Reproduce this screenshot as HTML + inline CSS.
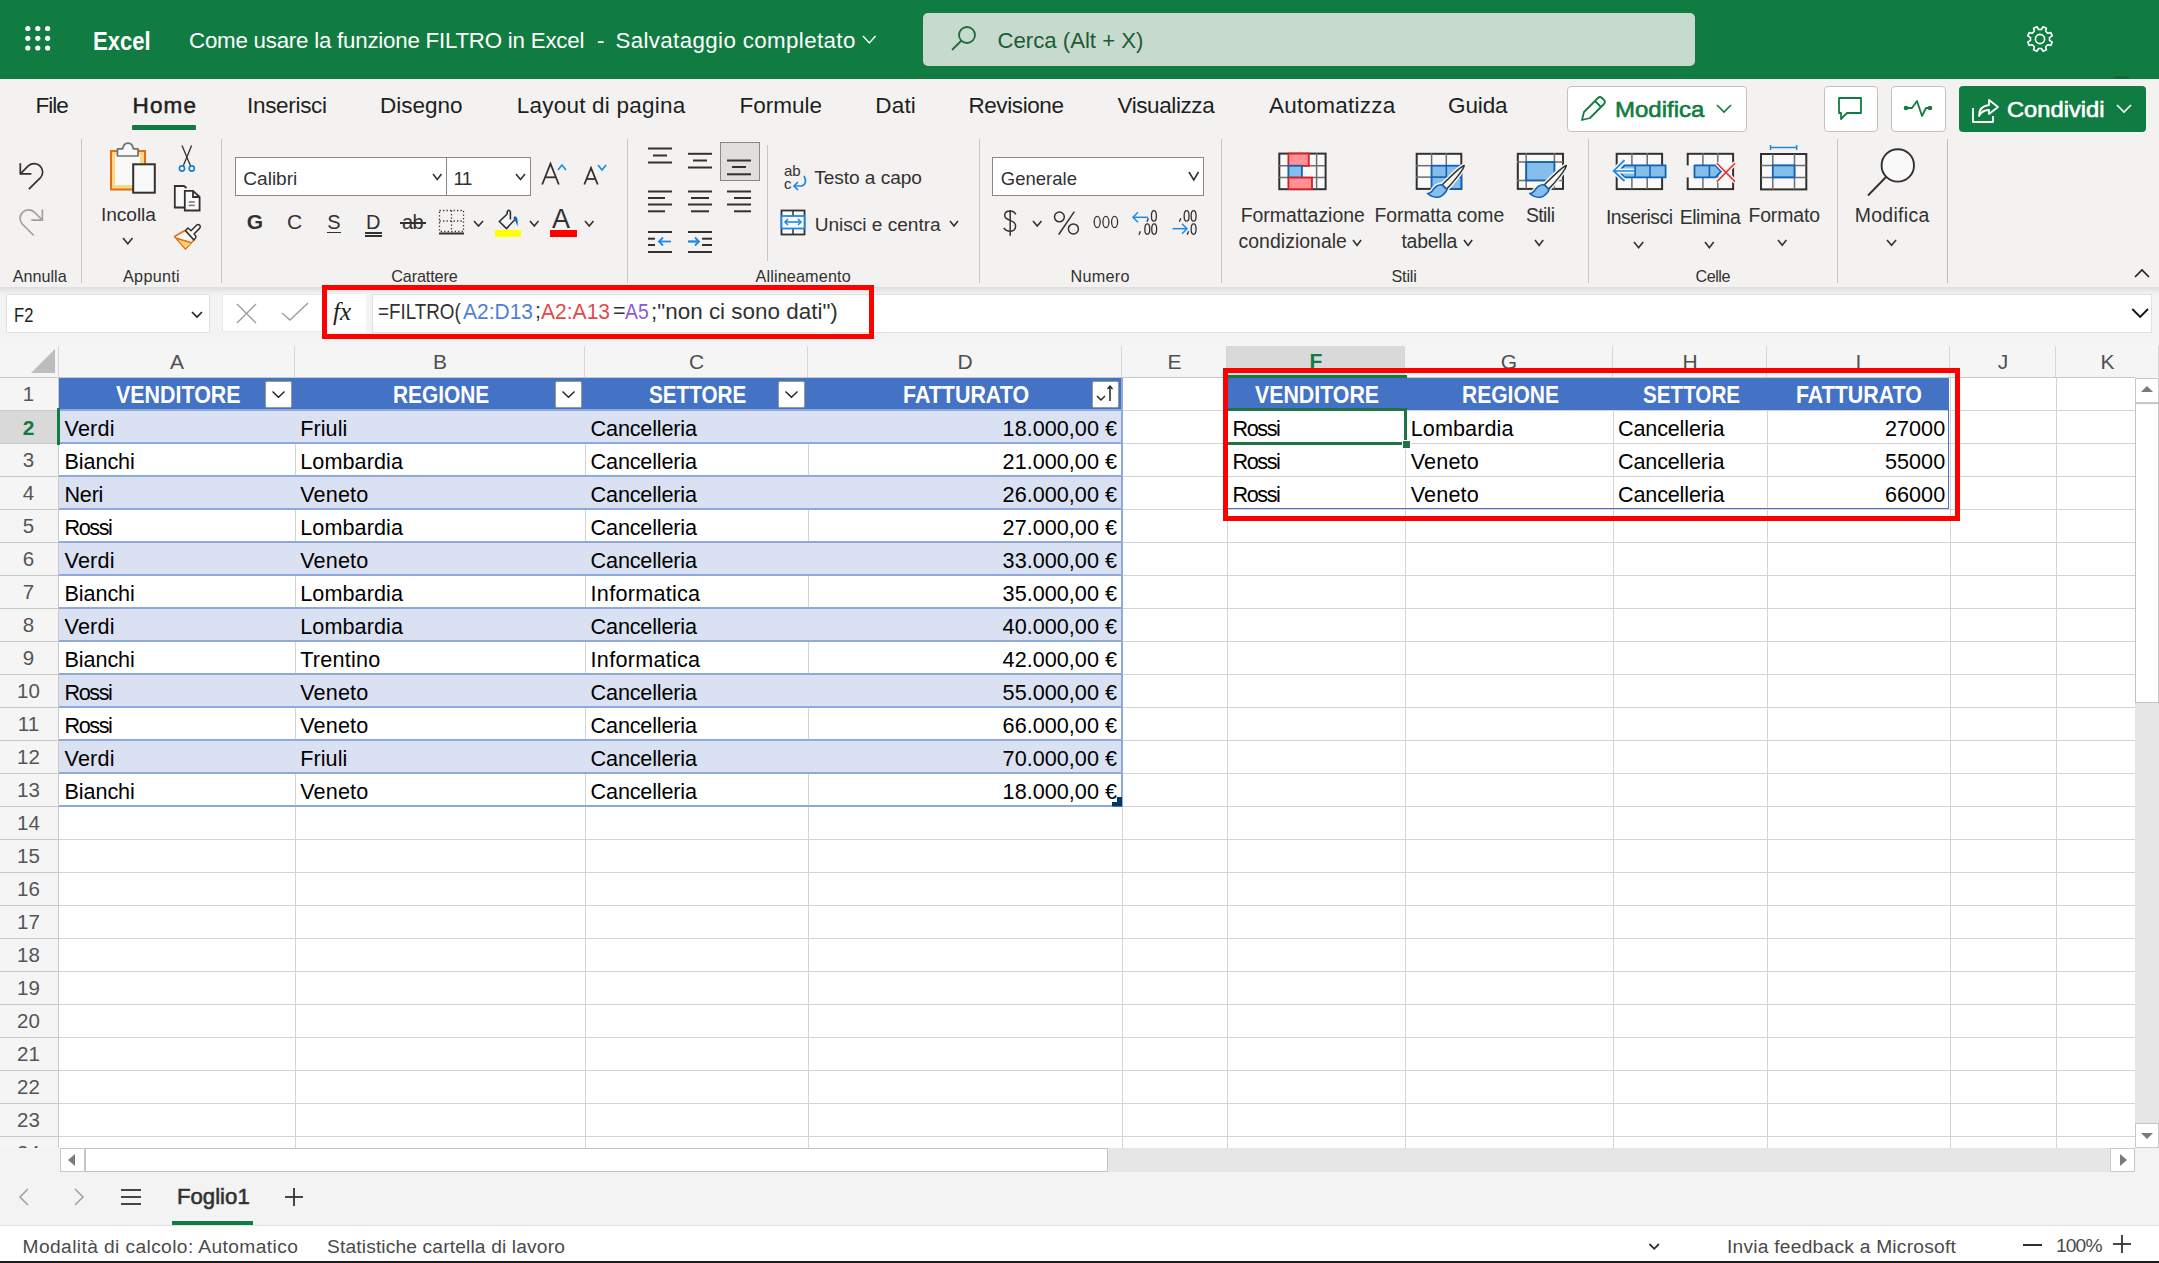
<!DOCTYPE html><html><head><meta charset="utf-8"><style>
*{margin:0;padding:0;box-sizing:border-box}
html,body{width:2159px;height:1263px;overflow:hidden;background:#fff}
body{position:relative;font-family:"Liberation Sans",sans-serif}
.a{position:absolute}
.t{white-space:pre;line-height:1}
</style></head><body><div class="a" style="left:0px;top:0px;width:2159px;height:79px;background:#107c41"></div>
<svg class="a" style="left:0px;top:0px;" width="70" height="70" viewBox="0 0 70 70"><circle cx="27.8" cy="28.5" r="2.6" fill="#fff"/><circle cx="37.8" cy="28.5" r="2.6" fill="#fff"/><circle cx="47.6" cy="28.5" r="2.6" fill="#fff"/><circle cx="27.8" cy="38.3" r="2.6" fill="#fff"/><circle cx="37.8" cy="38.3" r="2.6" fill="#fff"/><circle cx="47.6" cy="38.3" r="2.6" fill="#fff"/><circle cx="27.8" cy="48" r="2.6" fill="#fff"/><circle cx="37.8" cy="48" r="2.6" fill="#fff"/><circle cx="47.6" cy="48" r="2.6" fill="#fff"/></svg>
<div class="a t" style="left:92.80px;top:28.71px;font-size:25.14px;color:#fff;font-weight:700;transform:scaleX(0.8780);transform-origin:0 0;">Excel</div>
<div class="a t" style="left:189.00px;top:30.32px;font-size:22.3px;color:#fff;letter-spacing:-0.222px;">Come usare la funzione FILTRO in Excel</div>
<div class="a t" style="left:597.00px;top:30.32px;font-size:22.3px;color:#fff;">-</div>
<div class="a t" style="left:615.40px;top:30.32px;font-size:22.3px;color:#fff;letter-spacing:0.386px;">Salvataggio completato</div>
<svg class="a" style="left:860px;top:33px;" width="18" height="14" viewBox="0 0 18 14"><polyline points="3,3 9.3,10 15.6,3" fill="none" stroke="#fff" stroke-width="1.4"/></svg>
<div class="a" style="left:923px;top:13px;width:772px;height:53px;background:#c6dbcd;border-radius:5px"></div>
<svg class="a" style="left:950px;top:25px;" width="30" height="28" viewBox="0 0 30 28"><circle cx="17" cy="10" r="8" fill="none" stroke="#1e6b3c" stroke-width="1.8"/><line x1="11.5" y1="15.5" x2="2" y2="25" stroke="#1e6b3c" stroke-width="1.8"/></svg>
<div class="a t" style="left:997.50px;top:29.80px;font-size:22.2px;color:#1d5b34;letter-spacing:-0.014px;">Cerca (Alt + X)</div>
<svg class="a" style="left:2025px;top:24px;" width="30" height="30" viewBox="0 0 30 30"><g fill="none" stroke="#fff" stroke-width="1.6" stroke-linejoin="round"><polygon points="24.49,16.42 27.20,18.15 25.86,21.39 22.72,20.71 20.71,22.72 21.39,25.86 18.15,27.20 16.42,24.49 13.58,24.49 11.85,27.20 8.61,25.86 9.29,22.72 7.28,20.71 4.14,21.39 2.80,18.15 5.51,16.42 5.51,13.58 2.80,11.85 4.14,8.61 7.28,9.29 9.29,7.28 8.61,4.14 11.85,2.80 13.58,5.51 16.42,5.51 18.15,2.80 21.39,4.14 20.71,7.28 22.72,9.29 25.86,8.61 27.20,11.85 24.49,13.58"/><circle cx="15" cy="15" r="4.6"/></g></svg>
<div class="a" style="left:2113px;top:76px;width:17px;height:4px;border-radius:50%;background:#0e6a38"></div>
<div class="a" style="left:0px;top:79px;width:2159px;height:208px;background:#f3f2f1"></div>
<div class="a t" style="left:35.40px;top:95.25px;font-size:22.5px;color:#201f1e;letter-spacing:-0.967px;">File</div>
<div class="a t" style="left:132.50px;top:95.25px;font-size:22.5px;color:#201f1e;letter-spacing:1.133px;-webkit-text-stroke:0.5px #201f1e">Home</div>
<div class="a t" style="left:247.00px;top:95.25px;font-size:22.5px;color:#201f1e;letter-spacing:-0.312px;">Inserisci</div>
<div class="a t" style="left:380.00px;top:95.25px;font-size:22.5px;color:#201f1e;letter-spacing:-0.017px;">Disegno</div>
<div class="a t" style="left:516.70px;top:95.25px;font-size:22.5px;color:#201f1e;letter-spacing:0.233px;">Layout di pagina</div>
<div class="a t" style="left:739.60px;top:95.25px;font-size:22.5px;color:#201f1e;letter-spacing:-0.017px;">Formule</div>
<div class="a t" style="left:875.30px;top:95.25px;font-size:22.5px;color:#201f1e;letter-spacing:0.167px;">Dati</div>
<div class="a t" style="left:968.40px;top:95.25px;font-size:22.5px;color:#201f1e;letter-spacing:-0.400px;">Revisione</div>
<div class="a t" style="left:1117.50px;top:95.25px;font-size:22.5px;color:#201f1e;letter-spacing:-0.411px;">Visualizza</div>
<div class="a t" style="left:1269.00px;top:95.25px;font-size:22.5px;color:#201f1e;letter-spacing:0.250px;">Automatizza</div>
<div class="a t" style="left:1448.00px;top:95.25px;font-size:22.5px;color:#201f1e;letter-spacing:-0.125px;">Guida</div>
<div class="a" style="left:132px;top:125px;width:64px;height:5px;background:#107c41;border-radius:1px"></div>
<div class="a" style="left:1567px;top:86px;width:180px;height:46px;background:#fff;border:1px solid #c4c2c0;border-radius:4px"></div>
<svg class="a" style="left:1578px;top:94px;" width="32" height="30" viewBox="0 0 32 30"><g fill="none" stroke="#107c41" stroke-width="1.8" stroke-linejoin="round"><path d="M4,26 L6,18 L20,4 Q22,2 24,4 L26,6 Q28,8 26,10 L12,24 Z"/><line x1="17" y1="7" x2="23" y2="13"/></g></svg>
<div class="a t" style="left:1615.40px;top:98.88px;font-size:22.35px;color:#107c41;transform:scaleX(1.0731);transform-origin:0 0;-webkit-text-stroke:0.6px #107c41">Modifica</div>
<svg class="a" style="left:1715px;top:102px;" width="20" height="14" viewBox="0 0 20 14"><polyline points="2,3 9,10 16,3" fill="none" stroke="#107c41" stroke-width="1.6"/></svg>
<div class="a" style="left:1824px;top:86px;width:54px;height:46px;background:#fff;border:1px solid #c4c2c0;border-radius:4px"></div>
<svg class="a" style="left:1836px;top:96px;" width="30" height="26" viewBox="0 0 30 26"><path d="M3,2 H25 V17 H11 L5,23 V17 H3 Z" fill="none" stroke="#107c41" stroke-width="1.8" stroke-linejoin="round"/></svg>
<div class="a" style="left:1891px;top:86px;width:55px;height:46px;background:#fff;border:1px solid #c4c2c0;border-radius:4px"></div>
<svg class="a" style="left:1902px;top:97px;" width="32" height="24" viewBox="0 0 32 24"><polyline points="4,11 10,11 15,4 20,19 24,11 28,11" fill="none" stroke="#107c41" stroke-width="1.8" stroke-linejoin="round"/><circle cx="4" cy="11" r="2.3" fill="#107c41"/><circle cx="28" cy="11" r="2.3" fill="#107c41"/></svg>
<div class="a" style="left:1959px;top:86px;width:187px;height:46px;background:#107c41;border-radius:4px"></div>
<svg class="a" style="left:1971px;top:96px;" width="30" height="28" viewBox="0 0 30 28"><g fill="none" stroke="#fff" stroke-width="1.8" stroke-linejoin="round"><path d="M2,12 V26 H22 V20"/><path d="M8,20 Q8,10 18,9 V4 L27,11 L18,18 V14 Q11,14 8,20 Z"/></g></svg>
<div class="a t" style="left:2006.70px;top:98.88px;font-size:22.35px;color:#fff;transform:scaleX(1.0608);transform-origin:0 0;-webkit-text-stroke:0.6px #fff">Condividi</div>
<svg class="a" style="left:2115px;top:102px;" width="20" height="14" viewBox="0 0 20 14"><polyline points="2,3 9,10 16,3" fill="none" stroke="#fff" stroke-width="1.6"/></svg>
<div class="a" style="left:81px;top:139px;width:1px;height:144px;background:#c8c6c4"></div>
<div class="a" style="left:221px;top:139px;width:1px;height:144px;background:#c8c6c4"></div>
<div class="a" style="left:627px;top:139px;width:1px;height:144px;background:#c8c6c4"></div>
<div class="a" style="left:978.5px;top:139px;width:1px;height:144px;background:#c8c6c4"></div>
<div class="a" style="left:1220.6px;top:139px;width:1px;height:144px;background:#c8c6c4"></div>
<div class="a" style="left:1588px;top:139px;width:1px;height:144px;background:#c8c6c4"></div>
<div class="a" style="left:1837.3px;top:139px;width:1px;height:144px;background:#c8c6c4"></div>
<div class="a" style="left:1946.5px;top:139px;width:1.6px;height:144px;background:#bdbbb9"></div>
<div class="a t" style="left:12.80px;top:267.98px;font-size:16.2px;color:#323130;letter-spacing:-0.017px;">Annulla</div>
<div class="a t" style="left:123.00px;top:267.98px;font-size:16.2px;color:#323130;letter-spacing:0.300px;">Appunti</div>
<div class="a t" style="left:391.20px;top:267.98px;font-size:16.2px;color:#323130;letter-spacing:-0.125px;">Carattere</div>
<div class="a t" style="left:755.50px;top:267.98px;font-size:16.2px;color:#323130;letter-spacing:0.145px;">Allineamento</div>
<div class="a t" style="left:1070.50px;top:267.98px;font-size:16.2px;color:#323130;letter-spacing:0.280px;">Numero</div>
<div class="a t" style="left:1391.50px;top:267.98px;font-size:16.2px;color:#323130;letter-spacing:-0.200px;">Stili</div>
<div class="a t" style="left:1695.40px;top:267.98px;font-size:16.2px;color:#323130;letter-spacing:-0.450px;">Celle</div>
<svg class="a" style="left:2133px;top:266px;" width="20" height="14" viewBox="0 0 20 14"><polyline points="2,11 9,4 16,11" fill="none" stroke="#201f1e" stroke-width="1.6"/></svg>
<div class="a" style="left:0px;top:287px;width:2159px;height:58px;background:#f3f3f3"></div>
<div class="a" style="left:0px;top:287px;width:2159px;height:7px;background:linear-gradient(rgba(0,0,0,0.09),rgba(0,0,0,0))"></div>
<div class="a" style="left:6px;top:294px;width:204px;height:39px;background:#fff;border:1px solid #e1e1e1"></div>
<div class="a t" style="left:14.00px;top:305.27px;font-size:20.11px;color:#201f1e;transform:scaleX(0.8255);transform-origin:0 0;">F2</div>
<svg class="a" style="left:189px;top:309px;" width="16" height="12" viewBox="0 0 16 12"><polyline points="3,3 8,8 13,3" fill="none" stroke="#201f1e" stroke-width="1.6"/></svg>
<div class="a" style="left:222px;top:294px;width:144px;height:38px;background:#fff;border:1px solid #e8e8e8"></div>
<svg class="a" style="left:234px;top:302px;" width="26" height="24" viewBox="0 0 26 24"><g stroke="#a19f9d" stroke-width="1.5"><line x1="3" y1="2" x2="22" y2="21"/><line x1="22" y1="2" x2="3" y2="21"/></g></svg>
<svg class="a" style="left:279px;top:300px;" width="32" height="24" viewBox="0 0 32 24"><polyline points="3,13 11,20 29,3" fill="none" stroke="#a19f9d" stroke-width="1.5"/></svg>
<div class="a" style="left:326px;top:294px;width:40px;height:38px;background:#fff;border-left:1px solid #e8e8e8"></div>
<div class="a t" style="left:333px;top:299px;font-size:25px;font-family:'Liberation Serif',serif;font-style:italic;color:#201f1e">fx</div>
<div class="a" style="left:372px;top:294px;width:1780px;height:38.6px;background:#fff;border:1px solid #e1e1e1"></div>
<svg class="a" style="left:2126px;top:304px;" width="26" height="18" viewBox="0 0 26 18"><polyline points="6.3,5 14.2,13 22,5" fill="none" stroke="#111" stroke-width="1.8"/></svg>
<div class="a t" style="left:377.50px;top:300.55px;font-size:21.79px;color:#323130;transform:scaleX(0.8634);transform-origin:0 0;">=FILTRO(</div>
<div class="a t" style="left:463.20px;top:300.55px;font-size:21.79px;color:#4f7fd6;transform:scaleX(0.9629);transform-origin:0 0;">A2:D13</div>
<div class="a t" style="left:535.00px;top:300.80px;font-size:21.5px;color:#323130;">;</div>
<div class="a t" style="left:541.30px;top:300.55px;font-size:21.79px;color:#e24a4a;transform:scaleX(0.9664);transform-origin:0 0;">A2:A13</div>
<div class="a t" style="left:613.00px;top:300.80px;font-size:21.5px;color:#323130;">=</div>
<div class="a t" style="left:624.90px;top:300.55px;font-size:21.79px;color:#8a5ccf;transform:scaleX(0.8876);transform-origin:0 0;">A5</div>
<div class="a t" style="left:651.00px;top:300.55px;font-size:21.79px;color:#323130;transform:scaleX(1.0303);transform-origin:0 0;">;"non ci sono dati")</div>
<div class="a" style="left:0px;top:345px;width:2159px;height:33px;background:#f5f5f5"></div>
<div class="a" style="left:1227px;top:346px;width:178px;height:31px;background:#d9d9d9"></div>
<div class="a" style="left:294px;top:346px;width:1px;height:31px;background:#d6d6d6"></div>
<div class="a t" style="left:170.00px;top:351.22px;font-size:21px;color:#505050;">A</div>
<div class="a" style="left:584px;top:346px;width:1px;height:31px;background:#d6d6d6"></div>
<div class="a t" style="left:433.00px;top:351.22px;font-size:21px;color:#505050;">B</div>
<div class="a" style="left:807px;top:346px;width:1px;height:31px;background:#d6d6d6"></div>
<div class="a t" style="left:688.90px;top:351.22px;font-size:21px;color:#505050;">C</div>
<div class="a" style="left:1121px;top:346px;width:1px;height:31px;background:#d6d6d6"></div>
<div class="a t" style="left:957.40px;top:351.22px;font-size:21px;color:#505050;">D</div>
<div class="a" style="left:1226px;top:346px;width:1px;height:31px;background:#d6d6d6"></div>
<div class="a t" style="left:1167.50px;top:351.22px;font-size:21px;color:#505050;">E</div>
<div class="a" style="left:1404px;top:346px;width:1px;height:31px;background:#d6d6d6"></div>
<div class="a t" style="left:1309.60px;top:350.22px;font-size:21px;color:#107c41;font-weight:700;">F</div>
<div class="a" style="left:1612px;top:346px;width:1px;height:31px;background:#d6d6d6"></div>
<div class="a t" style="left:1500.85px;top:351.22px;font-size:21px;color:#505050;">G</div>
<div class="a" style="left:1766px;top:346px;width:1px;height:31px;background:#d6d6d6"></div>
<div class="a t" style="left:1682.40px;top:351.22px;font-size:21px;color:#505050;">H</div>
<div class="a" style="left:1949px;top:346px;width:1px;height:31px;background:#d6d6d6"></div>
<div class="a t" style="left:1855.60px;top:351.22px;font-size:21px;color:#505050;">I</div>
<div class="a" style="left:2055px;top:346px;width:1px;height:31px;background:#d6d6d6"></div>
<div class="a t" style="left:1997.75px;top:351.22px;font-size:21px;color:#505050;">J</div>
<div class="a" style="left:2158px;top:346px;width:1px;height:31px;background:#d6d6d6"></div>
<div class="a t" style="left:2100.50px;top:351.22px;font-size:21px;color:#505050;">K</div>
<div class="a" style="left:58px;top:346px;width:1px;height:31px;background:#d6d6d6"></div>
<div class="a" style="left:0px;top:377px;width:2135px;height:1px;background:#c8c8c8"></div>
<svg class="a" style="left:30px;top:348px;" width="26" height="26" viewBox="0 0 26 26"><polygon points="25,1 25,25 1,25" fill="#bdbdbd"/></svg>
<div class="a" style="left:0px;top:378px;width:58px;height:770px;background:#f5f5f5"></div>
<div class="a" style="left:58px;top:378px;width:1px;height:770px;background:#c8c8c8"></div>
<div class="a t" style="left:22.80px;top:383.64px;font-size:20.5px;color:#555;">1</div>
<div class="a" style="left:0px;top:410px;width:58px;height:1px;background:#c8c8c8"></div>
<div class="a" style="left:59px;top:410px;width:2076px;height:1px;background:#d4d4d4"></div>
<div class="a" style="left:0px;top:411px;width:57px;height:32px;background:#d9d9d9"></div>
<div class="a t" style="left:22.65px;top:416.72px;font-size:21px;color:#107c41;font-weight:700;">2</div>
<div class="a" style="left:0px;top:443px;width:58px;height:1px;background:#c8c8c8"></div>
<div class="a" style="left:59px;top:443px;width:2076px;height:1px;background:#d4d4d4"></div>
<div class="a t" style="left:22.80px;top:449.64px;font-size:20.5px;color:#555;">3</div>
<div class="a" style="left:0px;top:476px;width:58px;height:1px;background:#c8c8c8"></div>
<div class="a" style="left:59px;top:476px;width:2076px;height:1px;background:#d4d4d4"></div>
<div class="a t" style="left:22.80px;top:482.64px;font-size:20.5px;color:#555;">4</div>
<div class="a" style="left:0px;top:509px;width:58px;height:1px;background:#c8c8c8"></div>
<div class="a" style="left:59px;top:509px;width:2076px;height:1px;background:#d4d4d4"></div>
<div class="a t" style="left:22.80px;top:515.64px;font-size:20.5px;color:#555;">5</div>
<div class="a" style="left:0px;top:542px;width:58px;height:1px;background:#c8c8c8"></div>
<div class="a" style="left:59px;top:542px;width:2076px;height:1px;background:#d4d4d4"></div>
<div class="a t" style="left:22.80px;top:548.64px;font-size:20.5px;color:#555;">6</div>
<div class="a" style="left:0px;top:575px;width:58px;height:1px;background:#c8c8c8"></div>
<div class="a" style="left:59px;top:575px;width:2076px;height:1px;background:#d4d4d4"></div>
<div class="a t" style="left:22.80px;top:581.64px;font-size:20.5px;color:#555;">7</div>
<div class="a" style="left:0px;top:608px;width:58px;height:1px;background:#c8c8c8"></div>
<div class="a" style="left:59px;top:608px;width:2076px;height:1px;background:#d4d4d4"></div>
<div class="a t" style="left:22.80px;top:614.64px;font-size:20.5px;color:#555;">8</div>
<div class="a" style="left:0px;top:641px;width:58px;height:1px;background:#c8c8c8"></div>
<div class="a" style="left:59px;top:641px;width:2076px;height:1px;background:#d4d4d4"></div>
<div class="a t" style="left:22.80px;top:647.64px;font-size:20.5px;color:#555;">9</div>
<div class="a" style="left:0px;top:674px;width:58px;height:1px;background:#c8c8c8"></div>
<div class="a" style="left:59px;top:674px;width:2076px;height:1px;background:#d4d4d4"></div>
<div class="a t" style="left:17.10px;top:680.64px;font-size:20.5px;color:#555;">10</div>
<div class="a" style="left:0px;top:707px;width:58px;height:1px;background:#c8c8c8"></div>
<div class="a" style="left:59px;top:707px;width:2076px;height:1px;background:#d4d4d4"></div>
<div class="a t" style="left:17.85px;top:713.64px;font-size:20.5px;color:#555;">11</div>
<div class="a" style="left:0px;top:740px;width:58px;height:1px;background:#c8c8c8"></div>
<div class="a" style="left:59px;top:740px;width:2076px;height:1px;background:#d4d4d4"></div>
<div class="a t" style="left:17.10px;top:746.64px;font-size:20.5px;color:#555;">12</div>
<div class="a" style="left:0px;top:773px;width:58px;height:1px;background:#c8c8c8"></div>
<div class="a" style="left:59px;top:773px;width:2076px;height:1px;background:#d4d4d4"></div>
<div class="a t" style="left:17.10px;top:779.64px;font-size:20.5px;color:#555;">13</div>
<div class="a" style="left:0px;top:806px;width:58px;height:1px;background:#c8c8c8"></div>
<div class="a" style="left:59px;top:806px;width:2076px;height:1px;background:#d4d4d4"></div>
<div class="a t" style="left:17.10px;top:812.64px;font-size:20.5px;color:#555;">14</div>
<div class="a" style="left:0px;top:839px;width:58px;height:1px;background:#c8c8c8"></div>
<div class="a" style="left:59px;top:839px;width:2076px;height:1px;background:#d4d4d4"></div>
<div class="a t" style="left:17.10px;top:845.64px;font-size:20.5px;color:#555;">15</div>
<div class="a" style="left:0px;top:872px;width:58px;height:1px;background:#c8c8c8"></div>
<div class="a" style="left:59px;top:872px;width:2076px;height:1px;background:#d4d4d4"></div>
<div class="a t" style="left:17.10px;top:878.64px;font-size:20.5px;color:#555;">16</div>
<div class="a" style="left:0px;top:905px;width:58px;height:1px;background:#c8c8c8"></div>
<div class="a" style="left:59px;top:905px;width:2076px;height:1px;background:#d4d4d4"></div>
<div class="a t" style="left:17.10px;top:911.64px;font-size:20.5px;color:#555;">17</div>
<div class="a" style="left:0px;top:938px;width:58px;height:1px;background:#c8c8c8"></div>
<div class="a" style="left:59px;top:938px;width:2076px;height:1px;background:#d4d4d4"></div>
<div class="a t" style="left:17.10px;top:944.64px;font-size:20.5px;color:#555;">18</div>
<div class="a" style="left:0px;top:971px;width:58px;height:1px;background:#c8c8c8"></div>
<div class="a" style="left:59px;top:971px;width:2076px;height:1px;background:#d4d4d4"></div>
<div class="a t" style="left:17.10px;top:977.64px;font-size:20.5px;color:#555;">19</div>
<div class="a" style="left:0px;top:1004px;width:58px;height:1px;background:#c8c8c8"></div>
<div class="a" style="left:59px;top:1004px;width:2076px;height:1px;background:#d4d4d4"></div>
<div class="a t" style="left:17.10px;top:1010.64px;font-size:20.5px;color:#555;">20</div>
<div class="a" style="left:0px;top:1037px;width:58px;height:1px;background:#c8c8c8"></div>
<div class="a" style="left:59px;top:1037px;width:2076px;height:1px;background:#d4d4d4"></div>
<div class="a t" style="left:17.10px;top:1043.64px;font-size:20.5px;color:#555;">21</div>
<div class="a" style="left:0px;top:1070px;width:58px;height:1px;background:#c8c8c8"></div>
<div class="a" style="left:59px;top:1070px;width:2076px;height:1px;background:#d4d4d4"></div>
<div class="a t" style="left:17.10px;top:1076.64px;font-size:20.5px;color:#555;">22</div>
<div class="a" style="left:0px;top:1103px;width:58px;height:1px;background:#c8c8c8"></div>
<div class="a" style="left:59px;top:1103px;width:2076px;height:1px;background:#d4d4d4"></div>
<div class="a t" style="left:17.10px;top:1109.64px;font-size:20.5px;color:#555;">23</div>
<div class="a" style="left:0px;top:1136px;width:58px;height:1px;background:#c8c8c8"></div>
<div class="a" style="left:59px;top:1136px;width:2076px;height:1px;background:#d4d4d4"></div>
<div class="a t" style="left:17.10px;top:1142.64px;font-size:20.5px;color:#555;">24</div>
<div class="a" style="left:295px;top:378px;width:1px;height:770px;background:#d4d4d4"></div>
<div class="a" style="left:585px;top:378px;width:1px;height:770px;background:#d4d4d4"></div>
<div class="a" style="left:808px;top:378px;width:1px;height:770px;background:#d4d4d4"></div>
<div class="a" style="left:1122px;top:378px;width:1px;height:770px;background:#d4d4d4"></div>
<div class="a" style="left:1227px;top:378px;width:1px;height:770px;background:#d4d4d4"></div>
<div class="a" style="left:1405px;top:378px;width:1px;height:770px;background:#d4d4d4"></div>
<div class="a" style="left:1613px;top:378px;width:1px;height:770px;background:#d4d4d4"></div>
<div class="a" style="left:1767px;top:378px;width:1px;height:770px;background:#d4d4d4"></div>
<div class="a" style="left:1950px;top:378px;width:1px;height:770px;background:#d4d4d4"></div>
<div class="a" style="left:2056px;top:378px;width:1px;height:770px;background:#d4d4d4"></div>
<div class="a" style="left:59px;top:378px;width:1063px;height:31px;background:#4472c4"></div>
<div class="a" style="left:59px;top:411px;width:1063px;height:32px;background:#d9e1f2"></div>
<div class="a" style="left:59px;top:477px;width:1063px;height:32px;background:#d9e1f2"></div>
<div class="a" style="left:59px;top:543px;width:1063px;height:32px;background:#d9e1f2"></div>
<div class="a" style="left:59px;top:609px;width:1063px;height:32px;background:#d9e1f2"></div>
<div class="a" style="left:59px;top:675px;width:1063px;height:32px;background:#d9e1f2"></div>
<div class="a" style="left:59px;top:741px;width:1063px;height:32px;background:#d9e1f2"></div>
<div class="a" style="left:59px;top:409px;width:1064px;height:2px;background:#8ea9db"></div>
<div class="a" style="left:59px;top:442px;width:1064px;height:2px;background:#8ea9db"></div>
<div class="a" style="left:59px;top:475px;width:1064px;height:2px;background:#8ea9db"></div>
<div class="a" style="left:59px;top:508px;width:1064px;height:2px;background:#8ea9db"></div>
<div class="a" style="left:59px;top:541px;width:1064px;height:2px;background:#8ea9db"></div>
<div class="a" style="left:59px;top:574px;width:1064px;height:2px;background:#8ea9db"></div>
<div class="a" style="left:59px;top:607px;width:1064px;height:2px;background:#8ea9db"></div>
<div class="a" style="left:59px;top:640px;width:1064px;height:2px;background:#8ea9db"></div>
<div class="a" style="left:59px;top:673px;width:1064px;height:2px;background:#8ea9db"></div>
<div class="a" style="left:59px;top:706px;width:1064px;height:2px;background:#8ea9db"></div>
<div class="a" style="left:59px;top:739px;width:1064px;height:2px;background:#8ea9db"></div>
<div class="a" style="left:59px;top:772px;width:1064px;height:2px;background:#8ea9db"></div>
<div class="a" style="left:59px;top:805px;width:1064px;height:2px;background:#8ea9db"></div>
<div class="a" style="left:1121px;top:378px;width:2px;height:428px;background:#8ea9db"></div>
<div class="a t" style="left:64.50px;top:417.71px;font-size:21.6px;color:#000;letter-spacing:0.200px;">Verdi</div>
<div class="a t" style="left:300.20px;top:417.71px;font-size:21.6px;color:#000;letter-spacing:0.080px;">Friuli</div>
<div class="a t" style="left:590.60px;top:417.71px;font-size:21.6px;color:#000;letter-spacing:-0.160px;">Cancelleria</div>
<div class="a t" style="left:1002.60px;top:417.71px;font-size:21.6px;color:#000;letter-spacing:0.030px;">18.000,00 €</div>
<div class="a t" style="left:64.50px;top:450.71px;font-size:21.6px;color:#000;letter-spacing:-0.083px;">Bianchi</div>
<div class="a t" style="left:300.20px;top:450.71px;font-size:21.6px;color:#000;letter-spacing:0.088px;">Lombardia</div>
<div class="a t" style="left:590.60px;top:450.71px;font-size:21.6px;color:#000;letter-spacing:-0.160px;">Cancelleria</div>
<div class="a t" style="left:1002.60px;top:450.71px;font-size:21.6px;color:#000;letter-spacing:0.030px;">21.000,00 €</div>
<div class="a t" style="left:64.50px;top:483.71px;font-size:21.6px;color:#000;letter-spacing:-0.233px;">Neri</div>
<div class="a t" style="left:300.20px;top:483.71px;font-size:21.6px;color:#000;letter-spacing:0.160px;">Veneto</div>
<div class="a t" style="left:590.60px;top:483.71px;font-size:21.6px;color:#000;letter-spacing:-0.160px;">Cancelleria</div>
<div class="a t" style="left:1002.60px;top:483.71px;font-size:21.6px;color:#000;letter-spacing:0.030px;">26.000,00 €</div>
<div class="a t" style="left:64.50px;top:516.71px;font-size:21.6px;color:#000;letter-spacing:-1.425px;">Rossi</div>
<div class="a t" style="left:300.20px;top:516.71px;font-size:21.6px;color:#000;letter-spacing:0.088px;">Lombardia</div>
<div class="a t" style="left:590.60px;top:516.71px;font-size:21.6px;color:#000;letter-spacing:-0.160px;">Cancelleria</div>
<div class="a t" style="left:1002.60px;top:516.71px;font-size:21.6px;color:#000;letter-spacing:0.030px;">27.000,00 €</div>
<div class="a t" style="left:64.50px;top:549.71px;font-size:21.6px;color:#000;letter-spacing:0.200px;">Verdi</div>
<div class="a t" style="left:300.20px;top:549.71px;font-size:21.6px;color:#000;letter-spacing:0.160px;">Veneto</div>
<div class="a t" style="left:590.60px;top:549.71px;font-size:21.6px;color:#000;letter-spacing:-0.160px;">Cancelleria</div>
<div class="a t" style="left:1002.60px;top:549.71px;font-size:21.6px;color:#000;letter-spacing:0.030px;">33.000,00 €</div>
<div class="a t" style="left:64.50px;top:582.71px;font-size:21.6px;color:#000;letter-spacing:-0.083px;">Bianchi</div>
<div class="a t" style="left:300.20px;top:582.71px;font-size:21.6px;color:#000;letter-spacing:0.088px;">Lombardia</div>
<div class="a t" style="left:590.60px;top:582.71px;font-size:21.6px;color:#000;letter-spacing:0.270px;">Informatica</div>
<div class="a t" style="left:1002.60px;top:582.71px;font-size:21.6px;color:#000;letter-spacing:0.030px;">35.000,00 €</div>
<div class="a t" style="left:64.50px;top:615.71px;font-size:21.6px;color:#000;letter-spacing:0.200px;">Verdi</div>
<div class="a t" style="left:300.20px;top:615.71px;font-size:21.6px;color:#000;letter-spacing:0.088px;">Lombardia</div>
<div class="a t" style="left:590.60px;top:615.71px;font-size:21.6px;color:#000;letter-spacing:-0.160px;">Cancelleria</div>
<div class="a t" style="left:1002.60px;top:615.71px;font-size:21.6px;color:#000;letter-spacing:0.030px;">40.000,00 €</div>
<div class="a t" style="left:64.50px;top:648.71px;font-size:21.6px;color:#000;letter-spacing:-0.083px;">Bianchi</div>
<div class="a t" style="left:300.20px;top:648.71px;font-size:21.6px;color:#000;letter-spacing:0.229px;">Trentino</div>
<div class="a t" style="left:590.60px;top:648.71px;font-size:21.6px;color:#000;letter-spacing:0.270px;">Informatica</div>
<div class="a t" style="left:1002.60px;top:648.71px;font-size:21.6px;color:#000;letter-spacing:0.030px;">42.000,00 €</div>
<div class="a t" style="left:64.50px;top:681.71px;font-size:21.6px;color:#000;letter-spacing:-1.425px;">Rossi</div>
<div class="a t" style="left:300.20px;top:681.71px;font-size:21.6px;color:#000;letter-spacing:0.160px;">Veneto</div>
<div class="a t" style="left:590.60px;top:681.71px;font-size:21.6px;color:#000;letter-spacing:-0.160px;">Cancelleria</div>
<div class="a t" style="left:1002.60px;top:681.71px;font-size:21.6px;color:#000;letter-spacing:0.030px;">55.000,00 €</div>
<div class="a t" style="left:64.50px;top:714.71px;font-size:21.6px;color:#000;letter-spacing:-1.425px;">Rossi</div>
<div class="a t" style="left:300.20px;top:714.71px;font-size:21.6px;color:#000;letter-spacing:0.160px;">Veneto</div>
<div class="a t" style="left:590.60px;top:714.71px;font-size:21.6px;color:#000;letter-spacing:-0.160px;">Cancelleria</div>
<div class="a t" style="left:1002.60px;top:714.71px;font-size:21.6px;color:#000;letter-spacing:0.030px;">66.000,00 €</div>
<div class="a t" style="left:64.50px;top:747.71px;font-size:21.6px;color:#000;letter-spacing:0.200px;">Verdi</div>
<div class="a t" style="left:300.20px;top:747.71px;font-size:21.6px;color:#000;letter-spacing:0.080px;">Friuli</div>
<div class="a t" style="left:590.60px;top:747.71px;font-size:21.6px;color:#000;letter-spacing:-0.160px;">Cancelleria</div>
<div class="a t" style="left:1002.60px;top:747.71px;font-size:21.6px;color:#000;letter-spacing:0.030px;">70.000,00 €</div>
<div class="a t" style="left:64.50px;top:780.71px;font-size:21.6px;color:#000;letter-spacing:-0.083px;">Bianchi</div>
<div class="a t" style="left:300.20px;top:780.71px;font-size:21.6px;color:#000;letter-spacing:0.160px;">Veneto</div>
<div class="a t" style="left:590.60px;top:780.71px;font-size:21.6px;color:#000;letter-spacing:-0.160px;">Cancelleria</div>
<div class="a t" style="left:1002.60px;top:780.71px;font-size:21.6px;color:#000;letter-spacing:0.030px;">18.000,00 €</div>
<div class="a t" style="left:115.75px;top:383.26px;font-size:24.02px;color:#fff;font-weight:700;transform:scaleX(0.8918);transform-origin:0 0;">VENDITORE</div>
<div class="a t" style="left:392.60px;top:383.26px;font-size:24.02px;color:#fff;font-weight:700;transform:scaleX(0.8690);transform-origin:0 0;">REGIONE</div>
<div class="a t" style="left:649.05px;top:383.26px;font-size:24.02px;color:#fff;font-weight:700;transform:scaleX(0.8618);transform-origin:0 0;">SETTORE</div>
<div class="a t" style="left:903.00px;top:383.26px;font-size:24.02px;color:#fff;font-weight:700;transform:scaleX(0.8917);transform-origin:0 0;">FATTURATO</div>
<div class="a" style="left:264.5px;top:380.5px;width:27px;height:27px;background:#fff;border:1px solid #9a9a9a;border-radius:2px"></div>
<svg class="a" style="left:264.5px;top:381px;" width="27" height="27" viewBox="0 0 27 27"><polyline points="7.5,10.5 13.5,16.2 19.5,10.5" fill="none" stroke="#201f1e" stroke-width="1.4"/></svg>
<div class="a" style="left:554.5px;top:380.5px;width:27px;height:27px;background:#fff;border:1px solid #9a9a9a;border-radius:2px"></div>
<svg class="a" style="left:554.5px;top:381px;" width="27" height="27" viewBox="0 0 27 27"><polyline points="7.5,10.5 13.5,16.2 19.5,10.5" fill="none" stroke="#201f1e" stroke-width="1.4"/></svg>
<div class="a" style="left:778px;top:380.5px;width:27px;height:27px;background:#fff;border:1px solid #9a9a9a;border-radius:2px"></div>
<svg class="a" style="left:778px;top:381px;" width="27" height="27" viewBox="0 0 27 27"><polyline points="7.5,10.5 13.5,16.2 19.5,10.5" fill="none" stroke="#201f1e" stroke-width="1.4"/></svg>
<div class="a" style="left:1091.5px;top:380.5px;width:27px;height:27px;background:#fff;border:1px solid #9a9a9a;border-radius:2px"></div>
<svg class="a" style="left:1091.5px;top:381px;" width="27" height="27" viewBox="0 0 27 27"><polyline points="5,15 9,19 13,15" fill="none" stroke="#201f1e" stroke-width="1.4"/><line x1="18" y1="5" x2="18" y2="20" stroke="#201f1e" stroke-width="1.5"/><polyline points="15.5,8 18,5 20.5,8" fill="none" stroke="#201f1e" stroke-width="1.3"/></svg>
<svg class="a" style="left:1110px;top:795px;" width="14" height="14" viewBox="0 0 14 14"><polygon points="2,7 7,7 7,2 12,2 12,11.6 2,11.6" fill="#003865"/></svg>
<div class="a" style="left:1227px;top:378px;width:722px;height:31px;background:#4472c4"></div>
<div class="a" style="left:1227px;top:409px;width:722px;height:1px;background:#4472c4"></div>
<div class="a" style="left:1227px;top:508px;width:722px;height:1.2px;background:#4472c4"></div>
<div class="a" style="left:1948px;top:378px;width:1.2px;height:131px;background:#4472c4"></div>
<div class="a t" style="left:1255.00px;top:383.26px;font-size:24.02px;color:#fff;font-weight:700;transform:scaleX(0.8883);transform-origin:0 0;">VENDITORE</div>
<div class="a t" style="left:1461.50px;top:383.26px;font-size:24.02px;color:#fff;font-weight:700;transform:scaleX(0.8762);transform-origin:0 0;">REGIONE</div>
<div class="a t" style="left:1642.50px;top:383.26px;font-size:24.02px;color:#fff;font-weight:700;transform:scaleX(0.8592);transform-origin:0 0;">SETTORE</div>
<div class="a t" style="left:1796.45px;top:383.26px;font-size:24.02px;color:#fff;font-weight:700;transform:scaleX(0.8896);transform-origin:0 0;">FATTURATO</div>
<div class="a t" style="left:1232.50px;top:417.71px;font-size:21.6px;color:#000;letter-spacing:-1.425px;">Rossi</div>
<div class="a t" style="left:1410.70px;top:417.71px;font-size:21.6px;color:#000;letter-spacing:0.088px;">Lombardia</div>
<div class="a t" style="left:1618.00px;top:417.71px;font-size:21.6px;color:#000;letter-spacing:-0.160px;">Cancelleria</div>
<div class="a t" style="left:1885.10px;top:417.71px;font-size:21.6px;color:#000;">27000</div>
<div class="a t" style="left:1232.50px;top:450.71px;font-size:21.6px;color:#000;letter-spacing:-1.425px;">Rossi</div>
<div class="a t" style="left:1410.70px;top:450.71px;font-size:21.6px;color:#000;letter-spacing:0.160px;">Veneto</div>
<div class="a t" style="left:1618.00px;top:450.71px;font-size:21.6px;color:#000;letter-spacing:-0.160px;">Cancelleria</div>
<div class="a t" style="left:1885.10px;top:450.71px;font-size:21.6px;color:#000;">55000</div>
<div class="a t" style="left:1232.50px;top:483.71px;font-size:21.6px;color:#000;letter-spacing:-1.425px;">Rossi</div>
<div class="a t" style="left:1410.70px;top:483.71px;font-size:21.6px;color:#000;letter-spacing:0.160px;">Veneto</div>
<div class="a t" style="left:1618.00px;top:483.71px;font-size:21.6px;color:#000;letter-spacing:-0.160px;">Cancelleria</div>
<div class="a t" style="left:1885.10px;top:483.71px;font-size:21.6px;color:#000;">66000</div>
<div class="a" style="left:1227px;top:375px;width:180px;height:3px;background:#107c41"></div>
<div class="a" style="left:57px;top:408px;width:3px;height:37px;background:#107c41"></div>
<div class="a" style="left:1227px;top:408px;width:180px;height:3px;background:#217346"></div>
<div class="a" style="left:1227px;top:442px;width:177px;height:3px;background:#217346"></div>
<div class="a" style="left:1403.5px;top:408px;width:3px;height:34px;background:#217346"></div>
<div class="a" style="left:1402.5px;top:441px;width:7px;height:7px;background:#217346;outline:1px solid #fff"></div>
<div class="a" style="left:321.5px;top:285px;width:552.5px;height:54px;border:5px solid #ff0000"></div>
<div class="a" style="left:1222.5px;top:367.5px;width:737px;height:153.3px;border:5px solid #ff0000"></div>
<div class="a" style="left:2135px;top:378px;width:24px;height:770px;background:#e6e6e6"></div>
<div class="a" style="left:2135px;top:378px;width:24px;height:25px;background:#fff;border:1px solid #c8c8c8"></div>
<svg class="a" style="left:2135px;top:378px;" width="24" height="25" viewBox="0 0 24 25"><polygon points="6,14 12,8 18,14" fill="#7a7a7a"/></svg>
<div class="a" style="left:2135px;top:403px;width:24px;height:300px;background:#fff;border:1px solid #bfc3c8"></div>
<div class="a" style="left:2135px;top:1123px;width:24px;height:25px;background:#fff;border:1px solid #c8c8c8"></div>
<svg class="a" style="left:2135px;top:1123px;" width="24" height="25" viewBox="0 0 24 25"><polygon points="6,10 12,16 18,10" fill="#7a7a7a"/></svg>
<div class="a" style="left:0px;top:1148px;width:2159px;height:24px;background:#f3f3f3"></div>
<div class="a" style="left:60px;top:1148px;width:2075px;height:24px;background:#e6e6e6"></div>
<div class="a" style="left:60px;top:1148px;width:25px;height:24px;background:#fff;border:1px solid #c8c8c8"></div>
<svg class="a" style="left:60px;top:1148px;" width="25" height="24" viewBox="0 0 25 24"><polygon points="15,6 8,12 15,18" fill="#7a7a7a"/></svg>
<div class="a" style="left:85px;top:1148px;width:23px;height:24px;background:#fff;border:1px solid #bfc3c8"></div>
<div class="a" style="left:85px;top:1148px;width:1023px;height:24px;background:#fff;border:1px solid #bfc3c8"></div>
<div class="a" style="left:2110px;top:1148px;width:25px;height:24px;background:#fff;border:1px solid #c8c8c8"></div>
<svg class="a" style="left:2110px;top:1148px;" width="25" height="24" viewBox="0 0 25 24"><polygon points="10,6 17,12 10,18" fill="#7a7a7a"/></svg>
<div class="a" style="left:0px;top:1172px;width:2159px;height:53px;background:#f3f3f3"></div>
<div class="a" style="left:0px;top:1225px;width:2159px;height:1px;background:#e1e1e1"></div>
<svg class="a" style="left:16px;top:1186px;" width="16" height="22" viewBox="0 0 16 22"><polyline points="12,3 4,11 12,19" fill="none" stroke="#a19f9d" stroke-width="1.5"/></svg>
<svg class="a" style="left:71px;top:1186px;" width="16" height="22" viewBox="0 0 16 22"><polyline points="4,3 12,11 4,19" fill="none" stroke="#a19f9d" stroke-width="1.5"/></svg>
<svg class="a" style="left:118px;top:1186px;" width="26" height="22" viewBox="0 0 26 22"><g stroke="#323130" stroke-width="1.8"><line x1="3" y1="4" x2="23" y2="4"/><line x1="3" y1="11" x2="23" y2="11"/><line x1="3" y1="18" x2="23" y2="18"/></g></svg>
<div class="a t" style="left:176.60px;top:1185.84px;font-size:22.63px;color:#323130;transform:scaleX(0.9798);transform-origin:0 0;-webkit-text-stroke:0.6px #323130">Foglio1</div>
<div class="a" style="left:172px;top:1221px;width:81px;height:4px;background:#107c41"></div>
<svg class="a" style="left:282px;top:1185px;" width="24" height="24" viewBox="0 0 24 24"><g stroke="#323130" stroke-width="1.8"><line x1="12" y1="3" x2="12" y2="21"/><line x1="3" y1="12" x2="21" y2="12"/></g></svg>
<div class="a" style="left:0px;top:1226px;width:2159px;height:35px;background:#fff"></div>
<div class="a" style="left:0px;top:1261px;width:2159px;height:2px;background:#1b1b1b"></div>
<div class="a t" style="left:22.60px;top:1236.54px;font-size:19.2px;color:#4a4a4a;letter-spacing:0.393px;">Modalità di calcolo: Automatico</div>
<div class="a t" style="left:327.00px;top:1236.54px;font-size:19.2px;color:#4a4a4a;letter-spacing:0.148px;">Statistiche cartella di lavoro</div>
<svg class="a" style="left:1646px;top:1239px;" width="16" height="14" viewBox="0 0 16 14"><polyline points="3.5,5 8.2,9.8 12.9,5" fill="none" stroke="#323130" stroke-width="1.8"/></svg>
<div class="a t" style="left:1727.00px;top:1236.54px;font-size:19.2px;color:#4a4a4a;letter-spacing:0.240px;">Invia feedback a Microsoft</div>
<div class="a" style="left:2023px;top:1244px;width:19px;height:2px;background:#323130"></div>
<div class="a t" style="left:2056.00px;top:1236.14px;font-size:19.2px;color:#4a4a4a;letter-spacing:-0.867px;">100%</div>
<svg class="a" style="left:2112px;top:1234px;" width="20" height="20" viewBox="0 0 20 20"><g stroke="#323130" stroke-width="1.8"><line x1="10" y1="1" x2="10" y2="19"/><line x1="1" y1="10" x2="19" y2="10"/></g></svg>
<svg class="a" style="left:10px;top:155px;" width="45" height="90" viewBox="0 0 45 90"><g fill="none" stroke-width="1.7" stroke-linejoin="miter" stroke-linecap="butt"><g stroke="#323130"><polyline points="10.3,8.2 10.3,18.9 21.4,18.9"/><path d="M10.3,18.9 L18.5,10.7 A8.5,8.5 0 0 1 30.5,22.7 L18.9,34.2"/></g><g stroke="#a19f9d"><polyline points="32.4,54.5 32.4,65.2 21.3,65.2"/><path d="M32.4,65.2 L24.2,57 A8.5,8.5 0 0 0 12.2,69 L23.8,80.5"/></g></g></svg>
<svg class="a" style="left:108px;top:141px;" width="50" height="54" viewBox="0 0 50 54">
<rect x="3" y="10" width="34" height="38.5" fill="#f7d88a" stroke="#e46c0a" stroke-width="2"/>
<rect x="7" y="13.8" width="25" height="30.2" fill="#f9f9f9"/>
<path d="M9.5,15 V7.8 H14.6 Q15.8,2.2 20,2.2 Q24.2,2.2 25.4,7.8 H30 V15 Z" fill="#f9f9f9" stroke="#707070" stroke-width="1.7" stroke-linejoin="round"/>
<rect x="25.2" y="23.3" width="21.6" height="28.4" fill="#f9f9f9" stroke="#323130" stroke-width="2"/>
</svg>
<div class="a t" style="left:101.00px;top:204.54px;font-size:19.2px;color:#323130;letter-spacing:-0.083px;">Incolla</div>
<svg class="a" style="left:120px;top:235px;" width="15.599999999999994" height="11.699999999999989" viewBox="0 0 15.599999999999994 11.699999999999989"><polyline points="3,3 7.799999999999997,8.699999999999989 12.599999999999994,3" fill="none" stroke="#323130" stroke-width="1.6"/></svg>
<svg class="a" style="left:176px;top:142px;" width="22" height="32" viewBox="0 0 22 32"><g fill="none"><line x1="6" y1="3.6" x2="14.6" y2="24" stroke="#323130" stroke-width="1.3"/><line x1="15.6" y1="3.6" x2="7.2" y2="24" stroke="#323130" stroke-width="1.3"/><circle cx="6" cy="26.5" r="2.6" stroke="#1e7fd0" stroke-width="1.6"/><circle cx="15.8" cy="26.5" r="2.6" stroke="#1e7fd0" stroke-width="1.6"/></g></svg>
<svg class="a" style="left:172px;top:183px;" width="30" height="30" viewBox="0 0 30 30"><g fill="#f9f9f9" stroke="#323130" stroke-width="1.8" stroke-linejoin="miter"><path d="M12.5,24.5 H2.8 V3 H12 L14.5,5"/><path d="M12.8,7.9 H21 L27.6,14 V27.5 H12.8 Z"/><polyline points="21,7.9 21,14 27.6,14" fill="none"/></g><g stroke="#6e6e6e" stroke-width="1.4"><line x1="16.7" y1="19" x2="22.8" y2="19"/><line x1="16.7" y1="22.4" x2="22.8" y2="22.4"/></g></svg>
<svg class="a" style="left:170px;top:220px;" width="36" height="36" viewBox="0 0 36 36"><polygon points="4.5,16.5 15,10.5 24,20 15.5,29" fill="#f9f9f9" stroke="#e46c0a" stroke-width="1.5" stroke-linejoin="round"/><polygon points="7.5,18.8 21.5,22.8 15.5,28" fill="#f6d27a"/><polyline points="6.5,18.3 21.5,22.8" stroke="#e46c0a" stroke-width="1.5"/><path d="M15.5,10.5 L18,8 L21,10.8 L26.5,5.3 Q28.3,3.8 29.8,5.3 Q31,7 29.5,8.4 L24,14 L26,16.2 Q26.2,18 24,20 Z" fill="#f9f9f9" stroke="#323130" stroke-width="1.5" stroke-linejoin="round"/></svg>
<div class="a" style="left:235px;top:157px;width:211px;height:39px;background:#fff;border:1px solid #8a8886;border-right:none"></div>
<div class="a" style="left:445.5px;top:157px;width:85.5px;height:39px;background:#fff;border:1px solid #8a8886"></div>
<div class="a t" style="left:243.30px;top:169.23px;font-size:19.1px;color:#323130;letter-spacing:-0.017px;">Calibri</div>
<svg class="a" style="left:429.5px;top:170.5px;" width="14.5" height="11.5" viewBox="0 0 14.5 11.5"><polyline points="3,3 7.25,8.5 11.5,3" fill="none" stroke="#323130" stroke-width="1.6"/></svg>
<div class="a t" style="left:453.50px;top:169.23px;font-size:19.1px;color:#323130;letter-spacing:-1.000px;">11</div>
<svg class="a" style="left:513px;top:170.5px;" width="15" height="11.5" viewBox="0 0 15 11.5"><polyline points="3,3 7.5,8.5 12,3" fill="none" stroke="#323130" stroke-width="1.6"/></svg>
<svg class="a" style="left:530px;top:150px;" width="80" height="40" viewBox="0 0 80 40"><g fill="none" stroke="#323130" stroke-width="1.8" stroke-linejoin="miter"><polyline points="12.2,34.5 20.5,13.6 28.8,34.5"/><line x1="15.6" y1="27.3" x2="25.4" y2="27.3"/><polyline points="54.3,34.5 61,18 67.7,34.5"/><line x1="56.9" y1="29" x2="65.1" y2="29"/></g></svg>
<svg class="a" style="left:556px;top:162.5px;" width="14" height="10" viewBox="0 0 14 10"><polyline points="2,7 6,2 10,7" fill="none" stroke="#1e88e5" stroke-width="1.6"/></svg>
<svg class="a" style="left:596px;top:162.5px;" width="14" height="10" viewBox="0 0 14 10"><polyline points="2,2 6,7 10,2" fill="none" stroke="#1e88e5" stroke-width="1.6"/></svg>
<div class="a t" style="left:246.70px;top:211.02px;font-size:21px;color:#323130;font-weight:700;">G</div>
<div class="a t" style="left:287.00px;top:211.02px;font-size:21px;color:#323130;">C</div>
<div class="a t" style="left:327.20px;top:211.87px;font-size:20px;color:#323130;">S</div>
<div class="a" style="left:327px;top:231.5px;width:13.6px;height:1.6px;background:#323130"></div>
<div class="a t" style="left:366.00px;top:211.87px;font-size:20px;color:#323130;">D</div>
<div class="a" style="left:365px;top:232px;width:17.4px;height:1.6px;background:#323130"></div>
<div class="a" style="left:365px;top:235px;width:17.4px;height:1.6px;background:#323130"></div>
<div class="a t" style="left:402.00px;top:211.87px;font-size:20px;color:#323130;letter-spacing:-0.700px;">ab</div>
<div class="a" style="left:400px;top:222px;width:25.8px;height:1.6px;background:#323130"></div>
<svg class="a" style="left:437px;top:208px;" width="30" height="30" viewBox="0 0 30 30"><g fill="none" stroke="#323130" stroke-width="1.3" stroke-dasharray="1.3,2.2"><rect x="2.5" y="2.5" width="24" height="21"/><line x1="14.5" y1="2.5" x2="14.5" y2="23.5"/><line x1="2.5" y1="13" x2="26.5" y2="13"/></g><line x1="2" y1="25.5" x2="27" y2="25.5" stroke="#323130" stroke-width="2"/></svg>
<svg class="a" style="left:471px;top:217.5px;" width="15" height="11.0" viewBox="0 0 15 11.0"><polyline points="3,3 7.5,8.0 12,3" fill="none" stroke="#323130" stroke-width="1.6"/></svg>
<svg class="a" style="left:490px;top:205px;" width="32" height="28" viewBox="0 0 32 28"><path d="M17.2,9 L9.4,16.5 L16.5,23.5 L24.9,14.5" fill="#f9f9f9" stroke="#323130" stroke-width="1.6" stroke-linejoin="miter"/><path d="M17.2,9.3 V6.8 Q18.8,3.6 20.4,6.8 V14.5" fill="none" stroke="#323130" stroke-width="1.6"/><path d="M23.3,13.2 Q24,11 25.5,11.3 Q28.8,12.6 27.4,21.5 Q26.3,16.5 23.3,13.2 Z" fill="#1565c0"/></svg>
<div class="a" style="left:495px;top:230px;width:26px;height:6.5px;background:#ffff00"></div>
<svg class="a" style="left:526.5px;top:217.5px;" width="14.5" height="11.0" viewBox="0 0 14.5 11.0"><polyline points="3,3 7.25,8.0 11.5,3" fill="none" stroke="#323130" stroke-width="1.6"/></svg>
<div class="a t" style="left:552.00px;top:206.14px;font-size:27px;color:#323130;">A</div>
<div class="a" style="left:550px;top:230px;width:27px;height:6.5px;background:#ff0000"></div>
<svg class="a" style="left:581.5px;top:217.5px;" width="14.5" height="11.0" viewBox="0 0 14.5 11.0"><polyline points="3,3 7.25,8.0 11.5,3" fill="none" stroke="#323130" stroke-width="1.6"/></svg>
<div class="a" style="left:720px;top:142px;width:40px;height:39px;background:#e1dfdd;border:1px solid #8a8886"></div>
<svg class="a" style="left:647px;top:0px;" width="40" height="300" viewBox="0 0 40 300"><line x1="1" y1="148.5" x2="25" y2="148.5" stroke="#323130" stroke-width="2"/><line x1="6" y1="155.5" x2="20" y2="155.5" stroke="#323130" stroke-width="2"/><line x1="1" y1="162.5" x2="25" y2="162.5" stroke="#323130" stroke-width="2"/></svg>
<svg class="a" style="left:687px;top:0px;" width="40" height="300" viewBox="0 0 40 300"><line x1="1" y1="153.8" x2="25" y2="153.8" stroke="#323130" stroke-width="2"/><line x1="6" y1="160.5" x2="20" y2="160.5" stroke="#323130" stroke-width="2"/><line x1="1" y1="167.5" x2="25" y2="167.5" stroke="#323130" stroke-width="2"/></svg>
<svg class="a" style="left:726px;top:0px;" width="40" height="300" viewBox="0 0 40 300"><line x1="1" y1="160.5" x2="25" y2="160.5" stroke="#323130" stroke-width="2"/><line x1="6" y1="167" x2="20" y2="167" stroke="#323130" stroke-width="2"/><line x1="1" y1="174.3" x2="25" y2="174.3" stroke="#323130" stroke-width="2"/></svg>
<svg class="a" style="left:647px;top:0px;" width="40" height="300" viewBox="0 0 40 300"><line x1="1" y1="191.5" x2="25" y2="191.5" stroke="#323130" stroke-width="2"/><line x1="1" y1="198" x2="18" y2="198" stroke="#323130" stroke-width="2"/><line x1="1" y1="204.5" x2="25" y2="204.5" stroke="#323130" stroke-width="2"/><line x1="1" y1="211.3" x2="18" y2="211.3" stroke="#323130" stroke-width="2"/></svg>
<svg class="a" style="left:687px;top:0px;" width="40" height="300" viewBox="0 0 40 300"><line x1="1" y1="191.5" x2="25" y2="191.5" stroke="#323130" stroke-width="2"/><line x1="4" y1="198" x2="22" y2="198" stroke="#323130" stroke-width="2"/><line x1="1" y1="204.5" x2="25" y2="204.5" stroke="#323130" stroke-width="2"/><line x1="4" y1="211.3" x2="22" y2="211.3" stroke="#323130" stroke-width="2"/></svg>
<svg class="a" style="left:726px;top:0px;" width="40" height="300" viewBox="0 0 40 300"><line x1="1" y1="191.5" x2="25" y2="191.5" stroke="#323130" stroke-width="2"/><line x1="8" y1="198" x2="25" y2="198" stroke="#323130" stroke-width="2"/><line x1="1" y1="204.5" x2="25" y2="204.5" stroke="#323130" stroke-width="2"/><line x1="8" y1="211.3" x2="25" y2="211.3" stroke="#323130" stroke-width="2"/></svg>
<svg class="a" style="left:647px;top:0px;" width="40" height="300" viewBox="0 0 40 300"><line x1="1" y1="232" x2="25" y2="232" stroke="#323130" stroke-width="2"/><line x1="1" y1="238.7" x2="8" y2="238.7" stroke="#323130" stroke-width="2"/><line x1="1" y1="245" x2="8" y2="245" stroke="#323130" stroke-width="2"/><line x1="1" y1="252" x2="25" y2="252" stroke="#323130" stroke-width="2"/></svg>
<svg class="a" style="left:687px;top:0px;" width="40" height="300" viewBox="0 0 40 300"><line x1="1" y1="232" x2="25" y2="232" stroke="#323130" stroke-width="2"/><line x1="15" y1="238.7" x2="25" y2="238.7" stroke="#323130" stroke-width="2"/><line x1="15" y1="245" x2="25" y2="245" stroke="#323130" stroke-width="2"/><line x1="1" y1="252" x2="25" y2="252" stroke="#323130" stroke-width="2"/></svg>
<svg class="a" style="left:648px;top:232px;" width="50" height="22" viewBox="0 0 50 22"><g fill="none" stroke="#1e88e5" stroke-width="1.8"><line x1="11" y1="9.5" x2="23" y2="9.5"/><polyline points="15,5.5 11,9.5 15,13.5"/><line x1="40" y1="9.5" x2="52" y2="9.5"/></g></svg>
<svg class="a" style="left:687px;top:232px;" width="20" height="22" viewBox="0 0 20 22"><g fill="none" stroke="#1e88e5" stroke-width="1.8"><line x1="1" y1="9.5" x2="12" y2="9.5"/><polyline points="8,5.5 12,9.5 8,13.5"/></g></svg>
<div class="a" style="left:767px;top:145px;width:1.2px;height:116px;background:#c8c6c4"></div>
<svg class="a" style="left:782px;top:163px;" width="28" height="30" viewBox="0 0 28 30"><text x="2" y="13" font-family="Liberation Sans" font-size="15" fill="#323130">ab</text><text x="2" y="26" font-family="Liberation Sans" font-size="15" fill="#323130">c</text><path d="M22,13 Q26,20 20,23 H13" fill="none" stroke="#1e88e5" stroke-width="1.7"/><polyline points="16,19 12,23 16,27" fill="none" stroke="#1e88e5" stroke-width="1.7"/></svg>
<div class="a t" style="left:814.20px;top:168.03px;font-size:19.1px;color:#323130;letter-spacing:-0.045px;">Testo a capo</div>
<svg class="a" style="left:779px;top:208px;" width="30" height="30" viewBox="0 0 30 30"><rect x="2.5" y="2.5" width="23" height="24" fill="#f9f9f9" stroke="#323130" stroke-width="1.8"/><line x1="14" y1="2.5" x2="14" y2="26.5" stroke="#323130" stroke-width="1.5"/><rect x="2.5" y="8" width="23" height="12.5" fill="#f9f9f9" stroke="#1e88e5" stroke-width="1.8"/><g fill="none" stroke="#1e88e5" stroke-width="1.6"><line x1="6" y1="14" x2="22" y2="14"/><polyline points="9,11 6,14 9,17"/><polyline points="19,11 22,14 19,17"/></g></svg>
<div class="a t" style="left:814.70px;top:214.63px;font-size:19.1px;color:#323130;letter-spacing:-0.021px;">Unisci e centra</div>
<svg class="a" style="left:946.5px;top:218px;" width="14.0" height="11" viewBox="0 0 14.0 11"><polyline points="3,3 7.0,8 11.0,3" fill="none" stroke="#323130" stroke-width="1.6"/></svg>
<div class="a" style="left:992px;top:157px;width:211.5px;height:38.5px;background:#fff;border:1px solid #8a8886"></div>
<div class="a t" style="left:1000.80px;top:169.84px;font-size:18.5px;color:#323130;letter-spacing:0.014px;">Generale</div>
<svg class="a" style="left:1186px;top:169px;" width="15.5" height="14" viewBox="0 0 15.5 14"><polyline points="3,3 7.75,11 12.5,3" fill="none" stroke="#323130" stroke-width="1.6"/></svg>
<svg class="a" style="left:995px;top:200px;" width="215" height="45" viewBox="0 0 215 45"><path d="M20.8,14.5 C19.8,12 17.2,11 15,11 C11.8,11 9.7,12.8 9.7,15.5 C9.7,18.2 12,19.3 15.2,20.4 C18.5,21.5 20.6,22.8 20.6,26.2 C20.6,29.2 18.2,31.2 15,31.2 C12.2,31.2 10.2,30 8.8,27.8 M15.2,10 V35.8" fill="none" stroke="#323130" stroke-width="1.5"/><circle cx="64.4" cy="16.9" r="4.9" fill="none" stroke="#323130" stroke-width="1.5"/><circle cx="78.4" cy="28.9" r="5" fill="none" stroke="#323130" stroke-width="1.5"/><line x1="79.3" y1="11.7" x2="63.7" y2="34.5" stroke="#323130" stroke-width="1.5"/><ellipse cx="102.20000000000005" cy="22" rx="3.0" ry="5.6" fill="none" stroke="#323130" stroke-width="1.3"/><ellipse cx="110.90000000000009" cy="22" rx="3.0" ry="5.6" fill="none" stroke="#323130" stroke-width="1.3"/><ellipse cx="119.59999999999991" cy="22" rx="3.0" ry="5.6" fill="none" stroke="#323130" stroke-width="1.3"/><line x1="153.39999999999992" y1="18.3" x2="151.99999999999991" y2="21.7" stroke="#323130" stroke-width="1.3"/><ellipse cx="158.9000000000001" cy="15.900000000000006" rx="2.45" ry="5.2" fill="none" stroke="#323130" stroke-width="1.3"/><line x1="145.39999999999992" y1="31.3" x2="143.99999999999991" y2="34.7" stroke="#323130" stroke-width="1.3"/><ellipse cx="152.29999999999995" cy="29.099999999999994" rx="2.45" ry="5.2" fill="none" stroke="#323130" stroke-width="1.3"/><ellipse cx="159.20000000000005" cy="29.099999999999994" rx="2.45" ry="5.2" fill="none" stroke="#323130" stroke-width="1.3"/><g fill="none" stroke="#1e88e5" stroke-width="1.5"><line x1="138" y1="17.3" x2="153" y2="17.3"/><polyline points="143,12.3 138,17.3 143,22.3"/></g><line x1="185.8" y1="18.3" x2="184.4" y2="21.7" stroke="#323130" stroke-width="1.3"/><ellipse cx="191.5999999999999" cy="15.900000000000006" rx="2.45" ry="5.2" fill="none" stroke="#323130" stroke-width="1.3"/><ellipse cx="198.5999999999999" cy="15.900000000000006" rx="2.45" ry="5.2" fill="none" stroke="#323130" stroke-width="1.3"/><line x1="193.59999999999997" y1="31.3" x2="192.19999999999996" y2="34.7" stroke="#323130" stroke-width="1.3"/><ellipse cx="198.5999999999999" cy="29.099999999999994" rx="2.45" ry="5.2" fill="none" stroke="#323130" stroke-width="1.3"/><g fill="none" stroke="#1e88e5" stroke-width="1.5"><line x1="177.5" y1="28.7" x2="192" y2="28.7"/><polyline points="187,23.7 192,28.7 187,33.7"/></g></svg>
<svg class="a" style="left:1029.5px;top:218px;" width="14.5" height="11" viewBox="0 0 14.5 11"><polyline points="3,3 7.25,8 11.5,3" fill="none" stroke="#323130" stroke-width="1.6"/></svg>
<svg class="a" style="left:1277px;top:151px;" width="52" height="42" viewBox="0 0 52 42">
<rect x="2.3" y="2.6" width="46.3" height="35.6" fill="#f9f9f9" stroke="#323130" stroke-width="2"/>
<line x1="2" y1="14.8" x2="48" y2="14.8" stroke="#6e6e6e" stroke-width="1.5"/><line x1="2" y1="26.6" x2="48" y2="26.6" stroke="#6e6e6e" stroke-width="1.5"/>
<line x1="39.6" y1="2" x2="39.6" y2="38" stroke="#6e6e6e" stroke-width="1.5"/>
<rect x="11.4" y="2.6" width="20.4" height="12.2" fill="#ff9098" stroke="#d92020" stroke-width="1.8"/>
<rect x="11.4" y="14.8" width="13.5" height="11.8" fill="#85bdeb" stroke="#0f62b8" stroke-width="1.8"/>
<rect x="11.4" y="26.6" width="23.6" height="11.6" fill="#ff9098" stroke="#d92020" stroke-width="1.8"/>
</svg>
<div class="a t" style="left:1240.70px;top:206.17px;font-size:19.4px;color:#323130;letter-spacing:0.017px;">Formattazione</div>
<div class="a t" style="left:1238.50px;top:232.07px;font-size:19.4px;color:#323130;letter-spacing:0.055px;">condizionale</div>
<svg class="a" style="left:1349.6px;top:237px;" width="14.100000000000136" height="11.5" viewBox="0 0 14.100000000000136 11.5"><polyline points="3,3 7.050000000000068,8.5 11.100000000000136,3" fill="none" stroke="#323130" stroke-width="1.6"/></svg>
<svg class="a" style="left:1400px;top:140px;" width="180" height="70" viewBox="0 0 180 70"><g transform="translate(-1400,-140)"><rect x="1416.7" y="153.8" width="44.6" height="35.1" fill="#f9f9f9" stroke="#323130" stroke-width="2"/><line x1="1416" y1="165.7" x2="1431.6" y2="165.7" stroke="#6e6e6e" stroke-width="1.5"/><line x1="1416" y1="177.1" x2="1431.6" y2="177.1" stroke="#6e6e6e" stroke-width="1.5"/><line x1="1431.6" y1="153" x2="1431.6" y2="189" stroke="#6e6e6e" stroke-width="1.5"/><line x1="1446.3" y1="153" x2="1446.3" y2="165.7" stroke="#6e6e6e" stroke-width="1.5"/><rect x="1431.6" y="165.7" width="29.7" height="23.2" fill="#85bdeb" stroke="#0f62b8" stroke-width="1.8"/><line x1="1431.6" y1="177.1" x2="1461.3" y2="177.1" stroke="#0f62b8" stroke-width="1.6"/><line x1="1446.3" y1="165.7" x2="1446.3" y2="188.9" stroke="#0f62b8" stroke-width="1.6"/><path d="M1464.20,165.40 C1460.20,166.40 1448.20,178.90 1442.20,184.90 L1446.50,189.10 C1452.50,183.10 1464.70,168.40 1464.20,165.40 Z" fill="#f3f2f1" stroke="#f3f2f1" stroke-width="4.5"/><path d="M1442.20,184.90 C1437.20,183.90 1434.20,187.90 1432.20,190.90 C1430.20,193.40 1429.50,193.50 1427.50,193.50 C1431.50,197.00 1433.60,197.30 1437.60,197.30 C1443.60,197.30 1448.50,188.10 1446.50,189.10 Z" fill="#f3f2f1" stroke="#f3f2f1" stroke-width="4.5"/><path d="M1464.20,165.40 C1460.20,166.40 1448.20,178.90 1442.20,184.90 L1446.50,189.10 C1452.50,183.10 1464.70,168.40 1464.20,165.40 Z" fill="#f9f9f9" stroke="#323130" stroke-width="1.5" stroke-linejoin="round"/><path d="M1442.20,184.90 C1437.20,183.90 1434.20,187.90 1432.20,190.90 C1430.20,193.40 1429.50,193.50 1427.50,193.50 C1431.50,197.00 1433.60,197.30 1437.60,197.30 C1443.60,197.30 1448.50,188.10 1446.50,189.10 Z" fill="#85bdeb" stroke="#0f62b8" stroke-width="1.6" stroke-linejoin="round"/><rect x="1517.8" y="153.8" width="45.2" height="35.1" fill="#f9f9f9" stroke="#323130" stroke-width="2"/><line x1="1517" y1="162.1" x2="1563" y2="162.1" stroke="#6e6e6e" stroke-width="1.5"/><line x1="1517" y1="180.4" x2="1563" y2="180.4" stroke="#6e6e6e" stroke-width="1.5"/><line x1="1526.2" y1="153" x2="1526.2" y2="189" stroke="#6e6e6e" stroke-width="1.5"/><line x1="1554.4" y1="153" x2="1554.4" y2="189" stroke="#6e6e6e" stroke-width="1.5"/><rect x="1526.2" y="162.1" width="28.2" height="18.3" fill="#85bdeb" stroke="#0f62b8" stroke-width="1.8"/><path d="M1566.30,165.40 C1562.30,166.40 1550.30,178.90 1544.30,184.90 L1548.60,189.10 C1554.60,183.10 1566.80,168.40 1566.30,165.40 Z" fill="#f3f2f1" stroke="#f3f2f1" stroke-width="4.5"/><path d="M1544.30,184.90 C1539.30,183.90 1536.30,187.90 1534.30,190.90 C1532.30,193.40 1531.60,193.50 1529.60,193.50 C1533.60,197.00 1535.70,197.30 1539.70,197.30 C1545.70,197.30 1550.60,188.10 1548.60,189.10 Z" fill="#f3f2f1" stroke="#f3f2f1" stroke-width="4.5"/><path d="M1566.30,165.40 C1562.30,166.40 1550.30,178.90 1544.30,184.90 L1548.60,189.10 C1554.60,183.10 1566.80,168.40 1566.30,165.40 Z" fill="#f9f9f9" stroke="#323130" stroke-width="1.5" stroke-linejoin="round"/><path d="M1544.30,184.90 C1539.30,183.90 1536.30,187.90 1534.30,190.90 C1532.30,193.40 1531.60,193.50 1529.60,193.50 C1533.60,197.00 1535.70,197.30 1539.70,197.30 C1545.70,197.30 1550.60,188.10 1548.60,189.10 Z" fill="#85bdeb" stroke="#0f62b8" stroke-width="1.6" stroke-linejoin="round"/></g></svg>
<div class="a t" style="left:1374.50px;top:206.17px;font-size:19.4px;color:#323130;letter-spacing:-0.058px;">Formatta come</div>
<div class="a t" style="left:1401.40px;top:232.07px;font-size:19.4px;color:#323130;letter-spacing:-0.200px;">tabella</div>
<svg class="a" style="left:1460.5px;top:237px;" width="14.200000000000045" height="11.5" viewBox="0 0 14.200000000000045 11.5"><polyline points="3,3 7.100000000000023,8.5 11.200000000000045,3" fill="none" stroke="#323130" stroke-width="1.6"/></svg>
<div class="a t" style="left:1525.90px;top:206.17px;font-size:19.4px;color:#323130;letter-spacing:-0.550px;">Stili</div>
<svg class="a" style="left:1532.3px;top:237px;" width="14.200000000000045" height="11.5" viewBox="0 0 14.200000000000045 11.5"><polyline points="3,3 7.100000000000023,8.5 11.200000000000045,3" fill="none" stroke="#323130" stroke-width="1.6"/></svg>
<svg class="a" style="left:1600px;top:140px;" width="150" height="60" viewBox="0 0 150 60"><g transform="translate(-1600,-140)"><rect x="1616.7" y="153.8" width="45.4" height="35.3" fill="#f9f9f9" stroke="#323130" stroke-width="2"/><line x1="1631.9" y1="153" x2="1631.9" y2="189" stroke="#6e6e6e" stroke-width="1.5"/><line x1="1647.2" y1="153" x2="1647.2" y2="189" stroke="#6e6e6e" stroke-width="1.5"/><path d="M1624.5,165.4 H1665.6 V177.4 H1624.5 L1619,171.4 Z" fill="#85bdeb" stroke="#0f62b8" stroke-width="1.8" stroke-linejoin="round"/><line x1="1635.2" y1="165.4" x2="1635.2" y2="177.4" stroke="#0f62b8" stroke-width="1.5"/><line x1="1650" y1="165.4" x2="1650" y2="177.4" stroke="#0f62b8" stroke-width="1.5"/><path d="M1624.5,160.2 L1613.6,171 L1624.5,181 M1613.6,171 H1634" fill="none" stroke="#f3f2f1" stroke-width="5"/><path d="M1624.5,160.2 L1613.6,171 L1624.5,181 M1613.6,171 H1634" fill="none" stroke="#1e88e5" stroke-width="1.7"/><rect x="1687.7" y="153.8" width="45.4" height="35.3" fill="#f9f9f9" stroke="#323130" stroke-width="2"/><line x1="1702.9" y1="153" x2="1702.9" y2="189" stroke="#6e6e6e" stroke-width="1.5"/><line x1="1717.8" y1="153" x2="1717.8" y2="189" stroke="#6e6e6e" stroke-width="1.5"/><rect x="1685" y="165.4" width="9" height="12" fill="#f3f2f1"/><path d="M1694.5,165.4 H1715.5 L1721.1,171.4 L1715.5,177.4 H1694.5 Z" fill="#85bdeb" stroke="#0f62b8" stroke-width="1.8" stroke-linejoin="round"/><line x1="1709.4" y1="165.4" x2="1709.4" y2="177.4" stroke="#0f62b8" stroke-width="1.5"/><path d="M1716.9,163.2 L1735,181.6 M1735,163.2 L1716.9,181.6" stroke="#f3f2f1" stroke-width="4.5"/><path d="M1716.9,163.2 L1735,181.6 M1735,163.2 L1716.9,181.6" stroke="#e83535" stroke-width="1.6"/></g></svg>
<svg class="a" style="left:1759.9px;top:152.9px;" width="52" height="40" viewBox="0 0 52 40"><rect x="1" y="1" width="45.3" height="35.4" fill="#f9f9f9" stroke="#323130" stroke-width="2"/><line x1="12.8" y1="1" x2="12.8" y2="36.4" stroke="#6e6e6e" stroke-width="1.5"/><line x1="34.5" y1="1" x2="34.5" y2="36.4" stroke="#6e6e6e" stroke-width="1.5"/><line x1="1" y1="12.5" x2="46.3" y2="12.5" stroke="#6e6e6e" stroke-width="1.5"/><line x1="1" y1="24.4" x2="46.3" y2="24.4" stroke="#6e6e6e" stroke-width="1.5"/><rect x="12.8" y="12.4" width="21.7" height="11.9" fill="#85bdeb" stroke="#0f62b8" stroke-width="1.8"/></svg>
<svg class="a" style="left:1768px;top:143px;" width="32" height="9" viewBox="0 0 32 9"><g stroke="#1e88e5" stroke-width="1.5"><line x1="2.5" y1="4.5" x2="28.7" y2="4.5"/><line x1="2.5" y1="2" x2="2.5" y2="7"/><line x1="28.7" y1="2" x2="28.7" y2="7"/></g></svg>
<div class="a t" style="left:1605.90px;top:208.37px;font-size:19.4px;color:#323130;letter-spacing:-0.500px;">Inserisci</div>
<svg class="a" style="left:1631.1px;top:239px;" width="15.200000000000045" height="11.699999999999989" viewBox="0 0 15.200000000000045 11.699999999999989"><polyline points="3,3 7.600000000000023,8.699999999999989 12.200000000000045,3" fill="none" stroke="#323130" stroke-width="1.6"/></svg>
<div class="a t" style="left:1679.70px;top:208.37px;font-size:19.4px;color:#323130;letter-spacing:-0.433px;">Elimina</div>
<svg class="a" style="left:1702.3px;top:239px;" width="14.700000000000045" height="11.699999999999989" viewBox="0 0 14.700000000000045 11.699999999999989"><polyline points="3,3 7.350000000000023,8.699999999999989 11.700000000000045,3" fill="none" stroke="#323130" stroke-width="1.6"/></svg>
<div class="a t" style="left:1748.40px;top:206.17px;font-size:19.4px;color:#323130;letter-spacing:-0.100px;">Formato</div>
<svg class="a" style="left:1775.4px;top:237px;" width="14.399999999999864" height="11.300000000000011" viewBox="0 0 14.399999999999864 11.300000000000011"><polyline points="3,3 7.199999999999932,8.300000000000011 11.399999999999864,3" fill="none" stroke="#323130" stroke-width="1.6"/></svg>
<svg class="a" style="left:1862px;top:145px;" width="60" height="56" viewBox="0 0 60 56"><circle cx="35.8" cy="20.4" r="16.2" fill="#f9f9f9" stroke="#323130" stroke-width="1.9"/><line x1="24" y1="32" x2="6" y2="50.5" stroke="#323130" stroke-width="1.9"/></svg>
<div class="a t" style="left:1854.70px;top:206.17px;font-size:19.4px;color:#323130;letter-spacing:0.343px;">Modifica</div>
<svg class="a" style="left:1883.6px;top:237px;" width="15.100000000000136" height="11.300000000000011" viewBox="0 0 15.100000000000136 11.300000000000011"><polyline points="3,3 7.550000000000068,8.300000000000011 12.100000000000136,3" fill="none" stroke="#323130" stroke-width="1.6"/></svg></body></html>
